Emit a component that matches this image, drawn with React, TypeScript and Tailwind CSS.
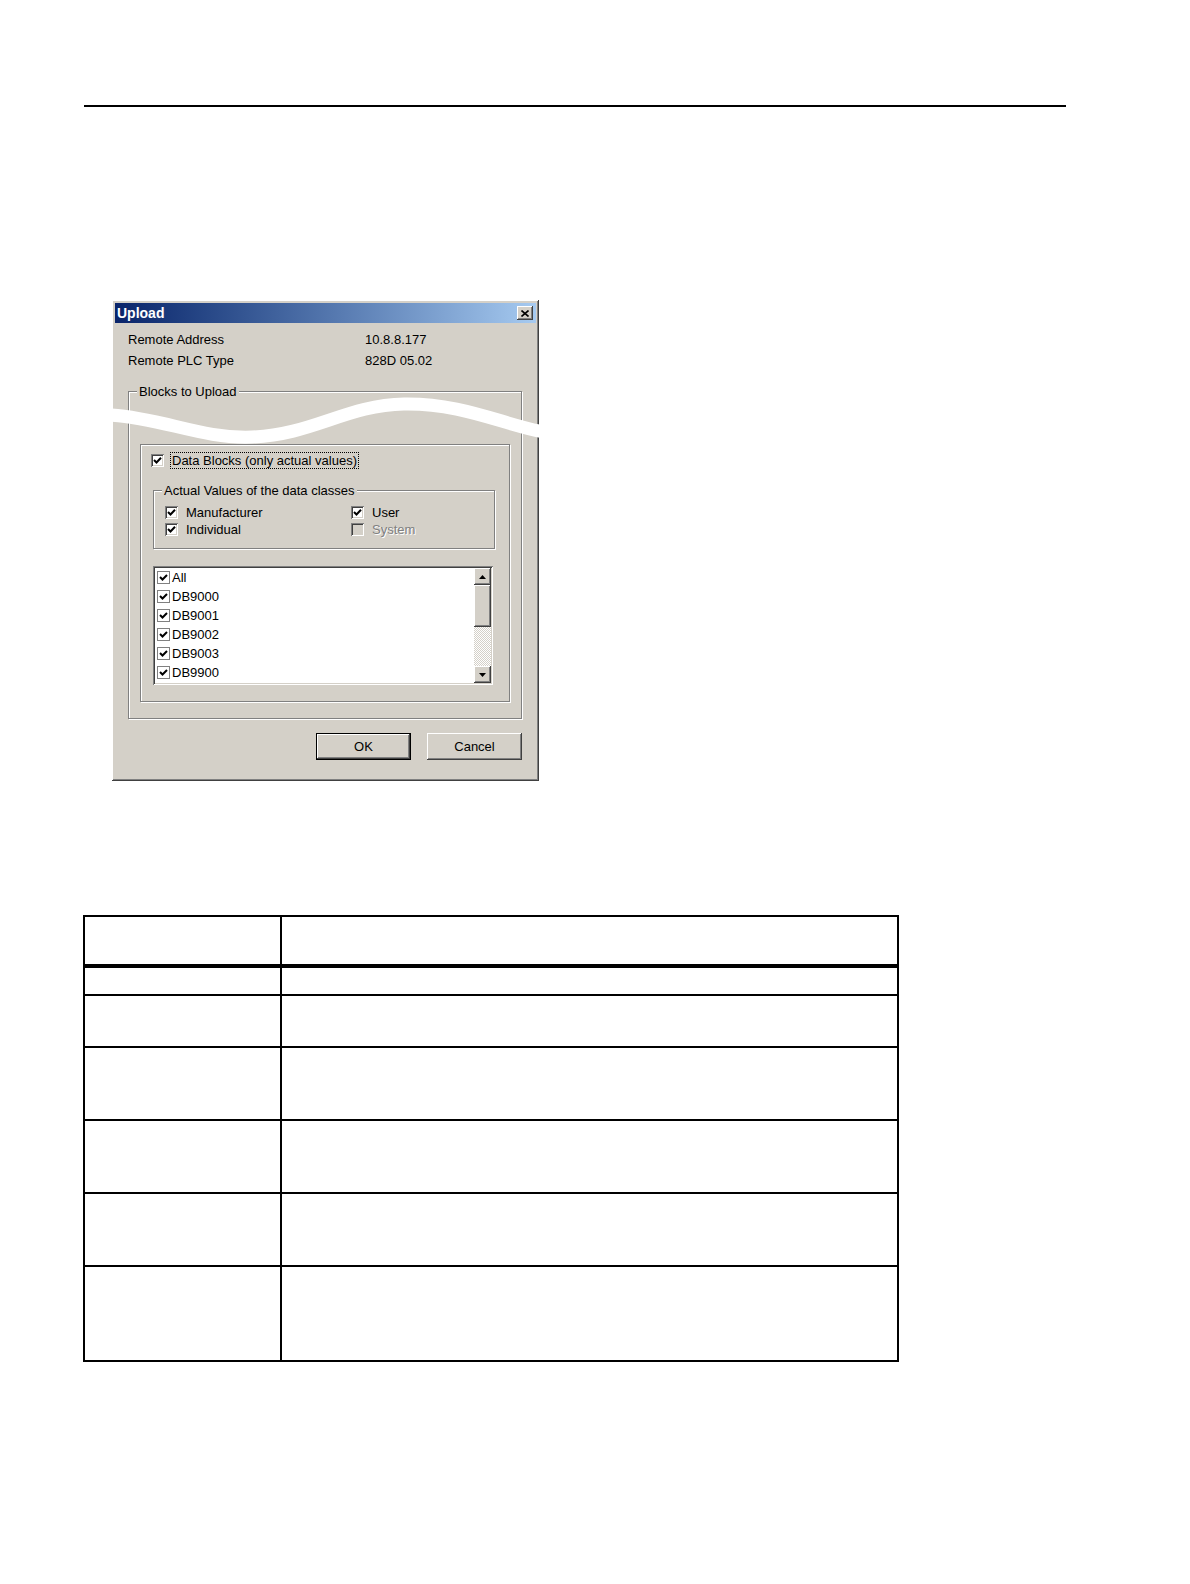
import React from "react";

const raised =
  "shadow-[inset_-1px_-1px_#404040,inset_1px_1px_#ffffff,inset_-2px_-2px_#808080,inset_2px_2px_#d4d0c8]";
const sunken =
  "shadow-[inset_1px_1px_#808080,inset_-1px_-1px_#ffffff,inset_2px_2px_#404040,inset_-2px_-2px_#d4d0c8]";
const etched = "border border-[#808080] shadow-[inset_1px_1px_#ffffff,1px_1px_#ffffff]";

function Tick() {
  return (
    <svg width="13" height="13" viewBox="0 0 13 13" className="absolute left-0 top-0">
      <polyline points="3,6 5.5,8.5 10,3.8" fill="none" stroke="#000" strokeWidth="2" />
    </svg>
  );
}

function Check({ checked, disabled }: { checked?: boolean; disabled?: boolean }) {
  return (
    <span
      className={`relative block h-[13px] w-[13px] shrink-0 ${sunken} ${
        disabled ? "bg-[#d4d0c8]" : "bg-white"
      }`}
    >
      {checked && <Tick />}
    </span>
  );
}

function CheckRow({ label, checked, disabled }: { label: string; checked?: boolean; disabled?: boolean }) {
  return (
    <div className="flex h-[17px] items-center gap-[8px]">
      <Check checked={checked} disabled={disabled} />
      <span className={disabled ? "text-[#808080] [text-shadow:1px_1px_#ffffff]" : ""}>{label}</span>
    </div>
  );
}

function GroupBox({
  label,
  className,
  children,
}: {
  label: string;
  className: string;
  children?: React.ReactNode;
}) {
  return (
    <div className={`relative ${etched} ${className}`}>
      {/* caption sits over the top edge */}
      <span className="absolute left-[8px] top-[-9px] bg-[#d4d0c8] px-[2px] leading-[17px]">{label}</span>
      {children}
    </div>
  );
}

function Arrow({ up }: { up?: boolean }) {
  return (
    <div className={`flex h-[17px] w-[17px] items-center justify-center bg-[#d4d0c8] ${raised}`}>
      <svg width="7" height="4" viewBox="0 0 7 4">
        <polygon points={up ? "0,4 7,4 3.5,0" : "0,0 7,0 3.5,4"} fill="#000" />
      </svg>
    </div>
  );
}

const blocks = ["All", "DB9000", "DB9001", "DB9002", "DB9003", "DB9900"];

function ListBox() {
  return (
    <div className={`mt-[17px] flex h-[119px] w-[340px] bg-white p-[2px] ${sunken}`}>
      <div className="flex flex-1 flex-col pl-[2px]">
        {blocks.map((b) => (
          <div key={b} className="flex h-[19px] items-center gap-[2px]">
            <span className="relative block h-[13px] w-[13px] border border-[#808080] bg-white">
              <svg width="11" height="11" viewBox="0 0 11 11" className="absolute left-0 top-0">
                <polyline points="2,5 4.5,7.5 9,3" fill="none" stroke="#000" strokeWidth="2" />
              </svg>
            </span>
            <span>{b}</span>
          </div>
        ))}
      </div>
      {/* Scrollbar */}
      <div className="flex w-[17px] flex-col">
        <Arrow up />
        <div className={`h-[42px] bg-[#d4d0c8] ${raised}`} />
        <div className="flex-1 bg-[repeating-conic-gradient(#d4d0c8_0%_25%,#ffffff_0%_50%)] bg-[length:2px_2px]" />
        <Arrow />
      </div>
    </div>
  );
}

function UploadDialog() {
  return (
    <div
      className={`relative ml-[112px] mt-[193px] h-[481px] w-[427px] bg-[#d4d0c8] p-[3px] text-[13px] leading-none text-black ${raised}`}
    >
      {/* Title bar */}
      <div className="flex h-[20px] items-center justify-between bg-gradient-to-r from-[#0a246a] to-[#a6caf0] pl-[2px] pr-[3px]">
        <span className="text-[14px] font-bold text-white">Upload</span>
        <div className={`flex h-[14px] w-[16px] items-center justify-center bg-[#d4d0c8] ${raised}`}>
          <svg width="8" height="7" viewBox="0 0 8 7">
            <path d="M0.5 0.5 L7.5 6.5 M7.5 0.5 L0.5 6.5" stroke="#000" strokeWidth="1.6" />
          </svg>
        </div>
      </div>

      <div className="pl-[13px] pr-[14px] pt-[6px]">
        <div className="flex h-[21px] items-center">
          <span className="w-[237px]">Remote Address</span>
          <span>10.8.8.177</span>
        </div>
        <div className="flex h-[21px] items-center">
          <span className="w-[237px]">Remote PLC Type</span>
          <span>828D 05.02</span>
        </div>

        <GroupBox label="Blocks to Upload" className="mt-[20px] h-[328px] px-[11px] pt-[52px]">
          <div className={`h-[258px] ${etched} pl-[12px] pt-[7px]`}>
            <div className="-ml-[2px] flex h-[17px] items-center gap-[6px]">
              <Check checked />
              <span className="border border-dotted border-black px-[1px] leading-[15px]">
                Data Blocks (only actual values)
              </span>
            </div>

            <GroupBox label="Actual Values of the data classes" className="mt-[21px] h-[59px] w-[342px] pl-[11px] pt-[13px]">
              <div className="flex">
                <div className="w-[186px]">
                  <CheckRow label="Manufacturer" checked />
                  <CheckRow label="Individual" checked />
                </div>
                <div>
                  <CheckRow label="User" checked />
                  <CheckRow label="System" disabled />
                </div>
              </div>
            </GroupBox>

            <ListBox />
          </div>
        </GroupBox>

        <div className="mt-[14px] flex justify-end gap-[16px]">
          <div className="h-[27px] w-[95px] border border-black">
            <div className={`flex h-full items-center justify-center bg-[#d4d0c8] ${raised}`}>OK</div>
          </div>
          <div className={`flex h-[27px] w-[95px] items-center justify-center bg-[#d4d0c8] ${raised}`}>Cancel</div>
        </div>
      </div>

      {/* screenshot break: white wave across the dialog */}
      <svg width="429" height="52" viewBox="0 0 429 52" className="absolute left-0 top-[95px]">
        <path
          d="M-2 20 C50 23 90 44 140 42 C200 40 235 10 292 9 C350 8 392 30 432 37"
          fill="none"
          stroke="#ffffff"
          strokeWidth="13"
        />
      </svg>
    </div>
  );
}

const rows = [
  "h-[51px] border-b-4",
  "h-[28px] border-b-2",
  "h-[52px] border-b-2",
  "h-[73px] border-b-2",
  "h-[73px] border-b-2",
  "h-[73px] border-b-2",
  "h-[93px]",
];

function EmptyTable() {
  return (
    <div className="ml-[83px] mt-[134px] w-[816px] border-2 border-black">
      {rows.map((r, i) => (
        <div key={i} className={`flex border-black ${r}`}>
          <div className="w-[197px] border-r-2 border-black" />
          <div className="flex-1" />
        </div>
      ))}
    </div>
  );
}

export default function App() {
  return (
    <div className="h-[1584px] w-full overflow-hidden bg-white pt-[105px] font-['Liberation_Sans',Arial,sans-serif]">
      <div className="ml-[84px] h-[2px] w-[982px] bg-black" />
      <UploadDialog />
      <EmptyTable />
    </div>
  );
}
